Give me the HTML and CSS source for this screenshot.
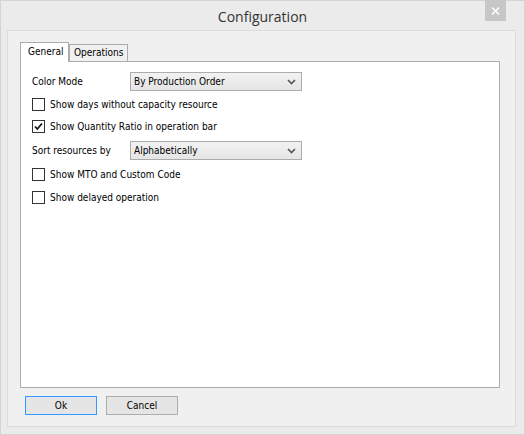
FILE: index.html
```html
<!DOCTYPE html>
<html>
<head>
<meta charset="utf-8">
<link rel="stylesheet" href="styles.css">
</head>
<body>
<div class="window">
  <div class="titlebar">
    <span class="title">Configuration</span>
    <div class="close"><svg width="9" height="8" viewBox="0 0 9 8"><path d="M1 0.5 L8 7.5 M8 0.5 L1 7.5" stroke="#fff" stroke-width="1.5"/></svg></div>
  </div>
  <div class="client">
    <div class="tabs">
      <div class="tab active">General</div>
      <div class="tab">Operations</div>
    </div>
    <div class="page">
      <div class="row field">
        <span class="label">Color Mode</span>
        <div class="combo"><span>By Production Order</span><svg class="arrow" width="9" height="6" viewBox="0 0 9 6"><path d="M1 1 L4.5 4.5 L8 1" fill="none" stroke="#555" stroke-width="1.6"/></svg></div>
      </div>
      <div class="row check gap7"><span class="box"></span><span>Show days without capacity resource</span></div>
      <div class="row check gap9"><span class="box"><svg width="11" height="11" viewBox="0 0 11 11"><path d="M2 5.5 L4.3 8 L9 2.5" fill="none" stroke="#111" stroke-width="1.8"/></svg></span><span>Show Quantity Ratio in operation bar</span></div>
      <div class="row field gap8">
        <span class="label">Sort resources by</span>
        <div class="combo"><span>Alphabetically</span><svg class="arrow" width="9" height="6" viewBox="0 0 9 6"><path d="M1 1 L4.5 4.5 L8 1" fill="none" stroke="#555" stroke-width="1.6"/></svg></div>
      </div>
      <div class="row check gap8"><span class="box"></span><span>Show MTO and Custom Code</span></div>
      <div class="row check gap10"><span class="box"></span><span>Show delayed operation</span></div>
    </div>
    <div class="buttons">
      <button class="btn default">Ok</button>
      <button class="btn">Cancel</button>
    </div>
  </div>
</div>
</body>
</html>
```
FILE: styles.css
```css
html, body {
  margin: 0;
  padding: 0;
}
body {
  width: 525px;
  height: 435px;
  font-family: "DejaVu Sans Condensed", "Liberation Sans", sans-serif;
  font-size: 10px;
  color: #000;
}
.window {
  box-sizing: border-box;
  width: 525px;
  height: 435px;
  background: #ebebeb;
  border: 1px solid #d4d4d4;
  display: flex;
  flex-direction: column;
}
.titlebar {
  height: 29px;
  position: relative;
  display: flex;
  justify-content: center;
  align-items: center;
}
.title {
  font-family: "Open Sans", sans-serif;
  font-size: 14px;
  color: #333;
  margin-top: 1px;
}
.close {
  position: absolute;
  right: 18px;
  top: -1px;
  width: 21px;
  height: 21px;
  background: #c7c7c7;
  display: flex;
  align-items: center;
  justify-content: center;
}
.client {
  margin: 0 8px 7px 6px;
  flex: 1;
  background: #f0f0f0;
  border: 1px solid #dcdcdc;
  display: flex;
  flex-direction: column;
  padding: 11px 15px 0 12px;
}
.tabs {
  display: flex;
  align-items: flex-end;
  height: 19px;
  position: relative;
  z-index: 1;
}
.tab {
  box-sizing: border-box;
  height: 17px;
  padding: 0 4px;
  border: 1px solid #adadad;
  border-bottom: none;
  background: #f0f0f0;
  line-height: 16px;
}
.tab.active {
  height: 20px;
  width: 49px;
  background: #fff;
  padding: 2px 0 0 7px;
  line-height: 14px;
  margin-bottom: -1px;
}
.page {
  flex: 0 0 auto;
  height: 327px;
  box-sizing: border-box;
  background: #fff;
  border: 1px solid #adadad;
  padding: 10px 0 0 11px;
}
.row {
  display: flex;
  align-items: center;
}
.field {
  height: 19px;
}
.label {
  width: 98px;
}
.combo {
  box-sizing: border-box;
  width: 172px;
  height: 19px;
  border: 1px solid #acacac;
  background: linear-gradient(#f2f2f2, #e5e5e5);
  display: flex;
  align-items: center;
  justify-content: space-between;
  padding: 0 5px 0 3px;
}
.arrow {
  margin-top: 1px;
}
.check {
  height: 13px;
}
.gap7 { margin-top: 7px; }
.gap8 { margin-top: 8px; }
.gap9 { margin-top: 9px; }
.gap10 { margin-top: 10px; }
.box {
  box-sizing: border-box;
  width: 13px;
  height: 13px;
  border: 1px solid #333;
  background: #fff;
  margin-right: 5px;
  display: flex;
  align-items: center;
  justify-content: center;
}
.buttons {
  display: flex;
  gap: 9px;
  padding: 8px 0 0 5px;
}
.btn {
  box-sizing: border-box;
  width: 72px;
  height: 19px;
  margin: 0;
  padding: 0;
  font-family: "DejaVu Sans Condensed", "Liberation Sans", sans-serif;
  font-size: 10px;
  color: #000;
  background: #e5e5e5;
  border: 1px solid #adadad;
}
.btn.default {
  border-color: #3399ff;
}
```
